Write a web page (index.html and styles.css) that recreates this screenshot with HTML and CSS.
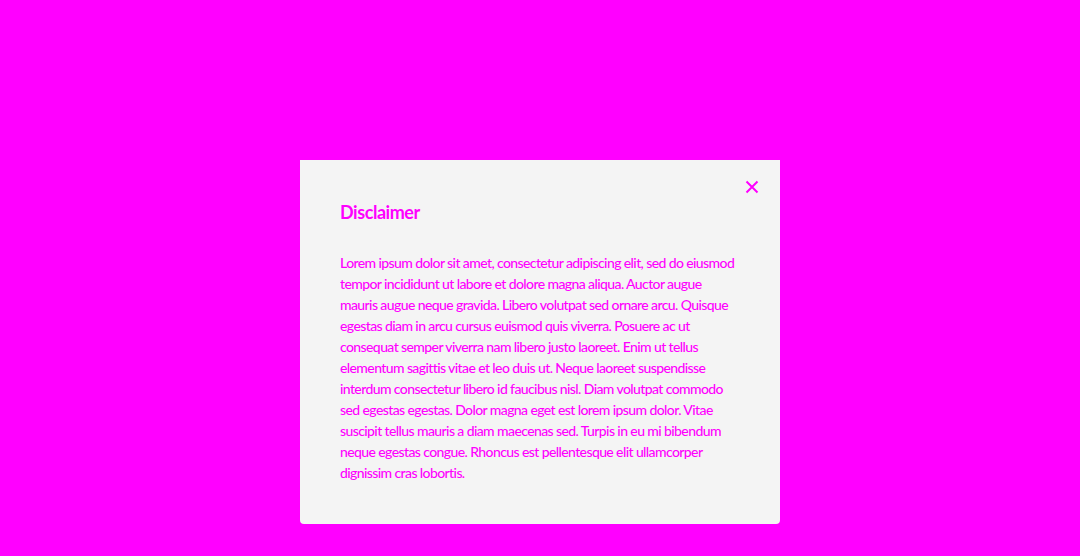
FILE: index.html
```html
<!DOCTYPE html>
<html lang="en">
<head>
<meta charset="utf-8">
<title>Disclaimer</title>
<link rel="stylesheet" href="styles.css">
</head>
<body>
<div class="stage">
  <section class="dialog" role="dialog" aria-labelledby="dlg-title">
    <button class="close" aria-label="Close">
      <svg width="14" height="14" viewBox="0 0 14 14" aria-hidden="true">
        <path d="M1.5 1.5 L12.5 12.5 M12.5 1.5 L1.5 12.5" stroke="#ff00ff" stroke-width="2" stroke-linecap="butt" fill="none"/>
      </svg>
    </button>
    <h2 class="title" id="dlg-title">Disclaimer</h2>
    <p class="body">Lorem ipsum dolor sit amet, consectetur adipiscing elit, sed do eiusmod<br>
tempor incididunt ut labore et dolore magna aliqua. Auctor augue<br>
mauris augue neque gravida. Libero volutpat sed ornare arcu. Quisque<br>
egestas diam in arcu cursus euismod quis viverra. Posuere ac ut<br>
consequat semper viverra nam libero justo laoreet. Enim ut tellus<br>
elementum sagittis vitae et leo duis ut. Neque laoreet suspendisse<br>
interdum consectetur libero id faucibus nisl. Diam volutpat commodo<br>
sed egestas egestas. Dolor magna eget est lorem ipsum dolor. Vitae<br>
suscipit tellus mauris a diam maecenas sed. Turpis in eu mi bibendum<br>
neque egestas congue. Rhoncus est pellentesque elit ullamcorper<br>
dignissim cras lobortis.</p>
  </section>
</div>
</body>
</html>
```

FILE: styles.css
```css
html, body {
  margin: 0;
  padding: 0;
  background: #ff00ff;
  width: 1080px;
  height: 556px;
  overflow: hidden;
}
.stage {
  display: flex;
  justify-content: center;
  padding-top: 160px;
}
.dialog {
  position: relative;
  width: 480px;
  box-sizing: border-box;
  padding: 40px 40px 41px 40px;
  background: #f4f4f4;
  border-radius: 0 0 4px 4px;
  font-family: Lato, "Liberation Sans", sans-serif;
  color: #ff00ff;
}
.close {
  position: absolute;
  top: 20px;
  right: 21px;
  width: 14px;
  height: 14px;
  padding: 0;
  border: 0;
  background: none;
  display: flex;
}
.title {
  margin: 0;
  font-size: 18px;
  line-height: 24px;
  font-weight: 700;
  letter-spacing: -0.45px;
}
.body {
  margin: 28px 0 0 0;
  font-size: 14px;
  line-height: 21px;
  font-weight: 500;
  letter-spacing: -0.6px;
  width: 410px;
  white-space: nowrap;
}
```
